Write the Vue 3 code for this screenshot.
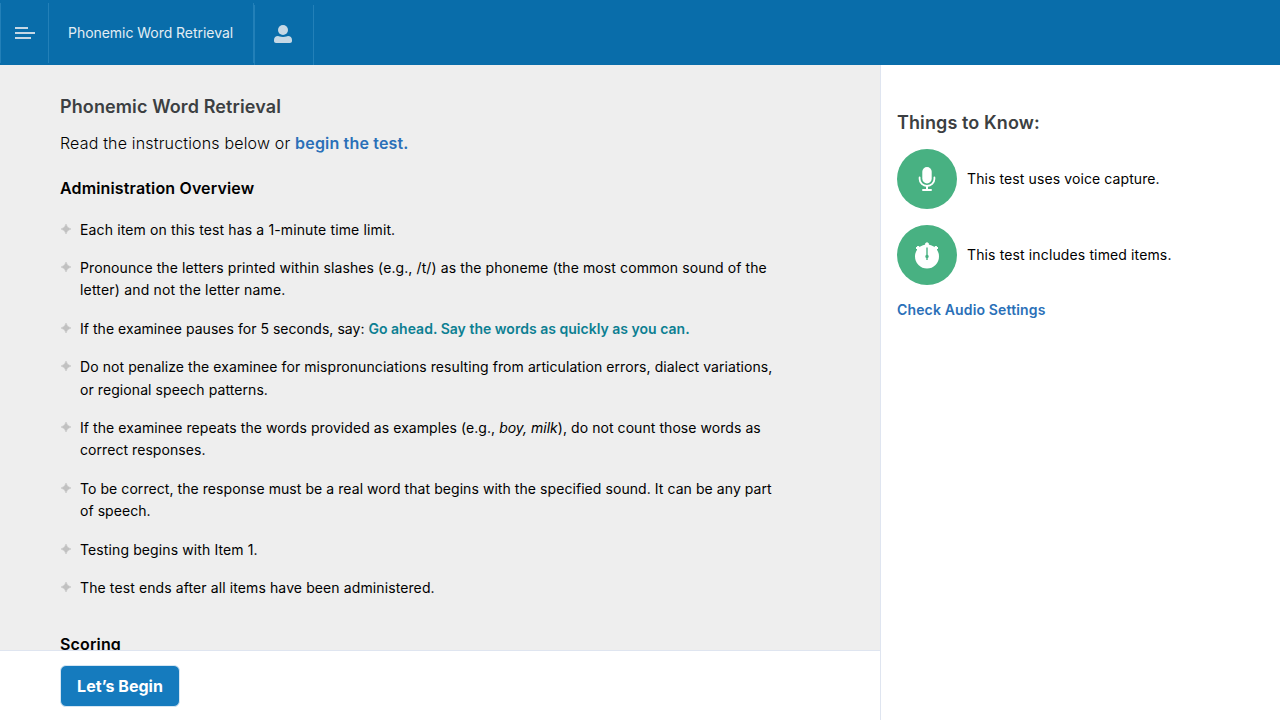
<script setup>
// Each instruction is a list of lines; each line is a list of runs: text, style, tracking in px.
const items = [
  [[{ t: 'Each item on this test has a 1-minute time limit.', k: 0.13 }]],
  [
    [{ t: 'Pronounce the letters printed within slashes (e.g., /t/) as the phoneme (the most common sound of the', k: 0.1 }],
    [{ t: 'letter) and not the letter name.', k: 0.18 }],
  ],
  [[{ t: 'If the examinee pauses for 5 seconds, say: ', k: 0.035 }, { t: 'Go ahead. Say the words as quickly as you can.', c: 'say', k: 0.015 }]],
  [
    [{ t: 'Do not penalize the examinee for mispronunciations resulting from articulation errors, dialect variations,', k: 0.076 }],
    [{ t: 'or regional speech patterns.', k: 0.08 }],
  ],
  [
    [{ t: 'If the examinee repeats the words provided as examples (e.g., ', k: 0.07 }, { t: 'boy, milk', c: 'em', k: 0 }, { t: '), do not count those words as', k: 0.06 }],
    [{ t: 'correct responses.', k: 0.06 }],
  ],
  [
    [{ t: 'To be correct, the response must be a real word that begins with the specified sound. It can be any part', k: 0.065 }],
    [{ t: 'of speech.', k: 0.05 }],
  ],
  [[{ t: 'Testing begins with Item 1.', k: 0.11 }]],
  [[{ t: 'The test ends after all items have been administered.', k: 0.106 }]],
]
</script>

<template>
  <div class="app">
    <header class="bar">
      <button class="cell menu" aria-label="Menu">
        <svg width="20" height="12" viewBox="0 0 20 12" fill="#c6d8e5"><path d="M0 0h13v2H0zM0 5h20v2H0zM0 10h16v2H0z" /></svg>
      </button>
      <div class="cell title">Phonemic Word Retrieval</div>
      <button class="cell user" aria-label="Account">
        <svg width="18" height="18" viewBox="0 0 18 18" fill="#c6d8e5"><circle cx="9" cy="5" r="5" /><path d="M0 16V15c0-2.4 1.6-4 4-4 1 0 2 1 5 1s4-1 5-1c2.400 0 4 1.600 4 4v1c0 1.200-.8 2-2 2H2c-1.200 0-2-.8-2-2z" /></svg>
      </button>
    </header>
    <div class="body">
      <div class="left">
        <main class="content">
          <h1>Phonemic Word Retrieval</h1>
          <p class="intro">Read the instructions below or <a>begin the test.</a></p>
          <h2>Administration Overview</h2>
          <ul>
            <li v-for="(lines, i) in items" :key="i">
              <svg class="star" width="10" height="10" viewBox="0 0 10 10" fill="#c1c1c1"><path d="M5 0Q5.900 4.100 10 5Q5.900 5.900 5 10Q4.100 5.900 0 5Q4.100 4.100 5 0z" stroke="#c1c1c1" stroke-width=".5" /></svg>
              <div>
                <p v-for="(line, l) in lines" :key="l"><span v-for="(s, j) in line" :key="j" :class="s.c" :style="{ letterSpacing: s.k + 'px' }">{{ s.t }}</span></p>
              </div>
            </li>
          </ul>
          <h2 class="scoring">Scoring</h2>
        </main>
        <footer><button class="begin">Let’s Begin</button></footer>
      </div>
      <aside>
        <h3>Things to Know:</h3>
        <div class="know">
          <span class="disc">
            <svg width="18" height="26" viewBox="0 0 18 26" fill="none" stroke="#fff"><rect x="4.3" y="1" width="9.4" height="16.5" rx="4.7" fill="#fff" stroke="none" /><path d="M1.600 11.500V13a7.400 7 0 0 0 14.800 0v-1.500" stroke-width="1.800" stroke-linecap="round" /><path d="M9 20v4M5 24h8" stroke-width="2" stroke-linecap="round" /></svg>
          </span>
          <span class="voice">This test uses voice capture.</span>
        </div>
        <div class="know">
          <span class="disc">
            <svg width="26" height="28" viewBox="0 0 26 28"><circle cx="13" cy="15.500" r="12" fill="#fff" /><path d="M11.700 2.300q1.300-1 2.600 0V4h-2.600zM2 7 4 5.200 6.500 7 4 9zM24 7 22 5.200 19.500 7 22 9z" fill="#fff" stroke="#fff" stroke-linejoin="round" /><path d="M12.300 6.500h1.400v7.300q1 .5 1 1.600t-1 1.700v2h-1.400v-2q-1-.6-1-1.700t1-1.600z" fill="#48b182" /></svg>
          </span>
          <span class="timed">This test includes timed items.</span>
        </div>
        <a class="audio">Check Audio Settings</a>
      </aside>
    </div>
  </div>
</template>

<style>
body { margin: 0; }
</style>

<style scoped>
.app { display: flex; flex-direction: column; width: 1280px; height: 720px; overflow: hidden; background: #fff; color: #000; font-family: Inter, "Liberation Sans", sans-serif; font-size: 14px; letter-spacing: 0.15px; }
.app * { box-sizing: border-box; }
h1, h2, h3, p, ul { margin: 0; padding: 0; }
button { font: inherit; letter-spacing: inherit; border: 0; background: none; padding: 0; }
.bar { height: 65px; flex: none; display: flex; background: #096daa; color: #e3edf4; }
.cell { display: flex; align-items: center; height: 60px; margin-top: 3px; border-left: 1px solid #2380b8; }
.menu { width: 48px; padding-left: 14px; }
.title { width: 206px; padding: 0 0 2px 19px; border-right: 1px solid #2380b8; letter-spacing: -0.04px; }
.user { width: 60px; margin-top: 5px; padding: 0 0 2px 19px; border-right: 1px solid #2380b8; }
.body { flex: 1; min-height: 0; display: flex; }
.left { width: 880px; display: flex; flex-direction: column; }
.content { flex: 1; min-height: 0; overflow: hidden; background: #eee; padding: 28px 100px 0 60px; }
h1, h3 { font-size: 18px; line-height: 28px; font-weight: 600; color: #3c3f42; letter-spacing: 0.11px; }
.intro { margin-top: 9px; font-size: 16px; line-height: 26px; font-weight: 300; letter-spacing: 0.17px; }
a { color: #2a70b8; font-weight: 600; }
h2 { margin-top: 19px; font-size: 16px; line-height: 26px; font-weight: 600; letter-spacing: 0.15px; }
ul { list-style: none; margin-top: 17.6px; }
li { display: flex; gap: 9px; padding-left: 1px; margin-bottom: 16px; line-height: 22.4px; }
li p { white-space: pre; }
.star { flex: none; margin-top: 5px; }
.say { color: #0c7f92; font-weight: 600; }
.em { font-style: italic; }
.scoring { margin-top: 31.200px; }
footer { height: 70px; flex: none; padding: 14px 60px; border-top: 1px solid #dfe5f0; }
.begin { width: 120px; height: 42px; border: 1px solid #d5e6f3; border-radius: 6px; background: #157bbe; color: #fff; font-size: 16px; font-weight: 700; letter-spacing: 0; }
aside { flex: 1; padding: 44px 16px; border-left: 1px solid #dfe5f0; }
.know { display: flex; align-items: center; gap: 10px; margin-bottom: 16px; }
.voice, .timed { padding-bottom: 2px; }
.voice { letter-spacing: 0.1px; }
.timed { letter-spacing: 0.13px; }
h3 + .know { margin-top: 12px; }
.disc { width: 60px; height: 60px; border-radius: 50%; background: #48b182; display: flex; align-items: center; justify-content: center; }
.audio { display: block; line-height: 18px; margin-top: 14px; }
</style>
